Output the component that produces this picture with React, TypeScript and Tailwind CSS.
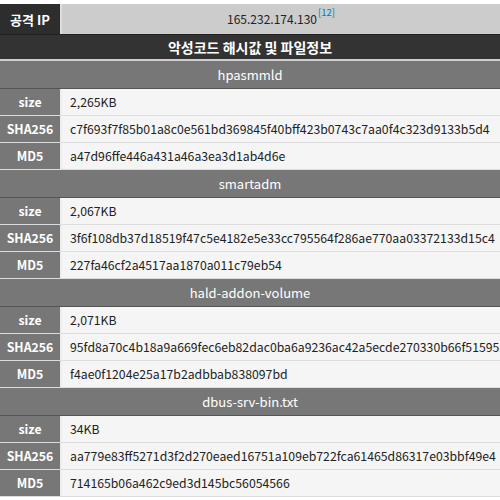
const files = [
  {
    name: "hpasmmld",
    size: "2,265KB",
    sha256: "c7f693f7f85b01a8c0e561bd369845f40bff423b0743c7aa0f4c323d9133b5d4",
    md5: "a47d96ffe446a431a46a3ea3d1ab4d6e",
  },
  {
    name: "smartadm",
    size: "2,067KB",
    sha256: "3f6f108db37d18519f47c5e4182e5e33cc795564f286ae770aa03372133d15c4",
    md5: "227fa46cf2a4517aa1870a011c79eb54",
  },
  {
    name: "hald-addon-volume",
    size: "2,071KB",
    sha256: "95fd8a70c4b18a9a669fec6eb82dac0ba6a9236ac42a5ecde270330b66f51595",
    md5: "f4ae0f1204e25a17b2adbbab838097bd",
  },
  {
    name: "dbus-srv-bin.txt",
    size: "34KB",
    sha256: "aa779e83ff5271d3f2d270eaed16751a109eb722fca61465d86317e03bbf49e4",
    md5: "714165b06a462c9ed3d145bc56054566",
  },
];

function Row({ label, value }: { label: string; value: string }) {
  return (
    <div className="flex h-[27px] border-b border-[#dddddd]">
      <div className="flex w-[62px] shrink-0 items-center justify-center border-r-2 border-[#eeeeee] bg-[#777777] text-[12.3px] font-bold text-white">
        {label}
      </div>
      <div className="flex flex-1 items-center whitespace-nowrap bg-[#f5f5f5] pl-2 text-[12.25px] text-[#222222]">
        {value}
      </div>
    </div>
  );
}

export default function App() {
  return (
    <div
      className="w-[500px] bg-white pt-1 leading-none"
      style={{ fontFamily: '"Noto Sans CJK KR", "Noto Sans", sans-serif' }}
    >
      <div className="flex h-[31px] border-b border-[#222222]">
        <div className="flex w-[62px] shrink-0 items-center justify-center border-r-2 border-[#dddddd] bg-[#2d2d2d] text-[13px] font-bold text-white">
          공격 IP
        </div>
        <div className="flex flex-1 items-center justify-center bg-[#cccccc] text-[12px] text-[#222222]">
          165.232.174.130
          <sup className="ml-px -translate-y-0.5 text-[9.5px] text-[#0275d8]">[12]</sup>
        </div>
      </div>
      <div className="flex h-[26px] items-center justify-center border-b-2 border-[#cfcfcf] bg-[#333333] text-[14px] font-bold text-white">
        악성코드 해시값 및 파일정보
      </div>
      {files.map((f) => (
        <div key={f.name}>
          <div className="flex h-[28px] items-center justify-center border-b border-[#555555] bg-[#777777] text-[13px] text-white">
            {f.name}
          </div>
          <Row label="size" value={f.size} />
          <Row label="SHA256" value={f.sha256} />
          <Row label="MD5" value={f.md5} />
        </div>
      ))}
    </div>
  );
}
